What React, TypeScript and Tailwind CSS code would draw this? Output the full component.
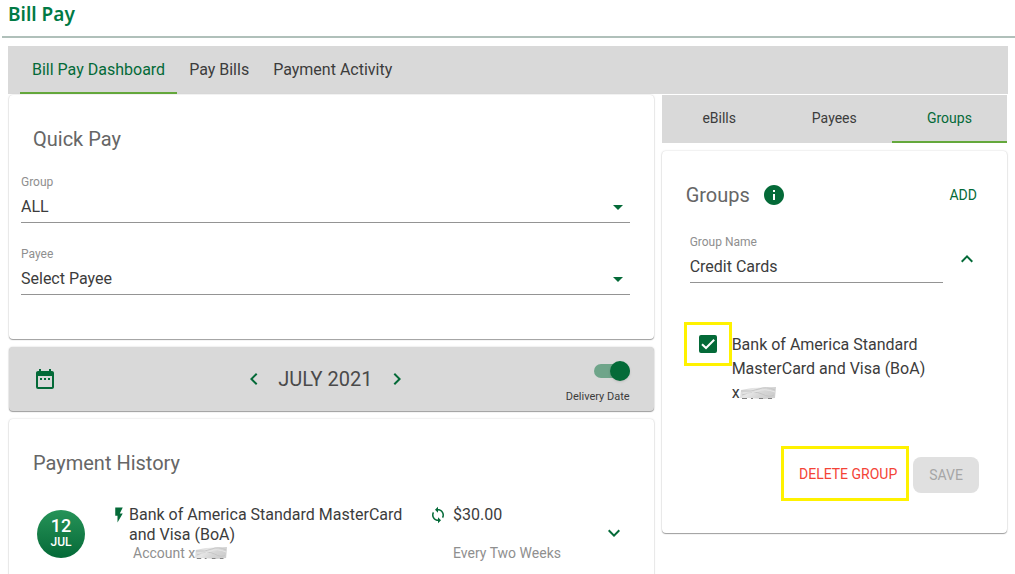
import { useState } from "react";
import {
  MdArrowDropDown,
  MdChevronLeft,
  MdChevronRight,
  MdDateRange,
  MdExpandLess,
  MdExpandMore,
  MdFlashOn,
  MdInfo,
  MdSync,
} from "react-icons/md";

const mainTabs = ["Bill Pay Dashboard", "Pay Bills", "Payment Activity"];
const sideTabs = ["eBills", "Payees", "Groups"];

const cardClasses =
  "rounded-sm bg-white shadow-[0_1px_1px_rgba(0,0,0,0.35),0_0_2px_rgba(0,0,0,0.2)]";

interface SelectFieldProps {
  id: string;
  label: string;
  options: string[];
}

function SelectField({ id, label, options }: SelectFieldProps) {
  return (
    <div>
      <label htmlFor={id} className="block text-xs leading-4 text-[#8f8f8f]">
        {label}
      </label>
      <div className="relative mt-[5px]">
        <select
          id={id}
          className="block w-full appearance-none border-b border-[#949494] bg-transparent pb-[3px] text-base leading-6 text-[#3c3c3c] outline-none"
        >
          {options.map((option) => (
            <option key={option}>{option}</option>
          ))}
        </select>
        <MdArrowDropDown
          size={24}
          className="pointer-events-none absolute right-0 top-0 text-[#046a38]"
        />
      </div>
    </div>
  );
}

// Scribble that hides the account digits
function Redaction({ id, className }: { id: string; className: string }) {
  return (
    <svg
      viewBox="0 0 36 12"
      preserveAspectRatio="none"
      className={className}
      role="img"
      aria-label="hidden digits"
    >
      <defs>
        <linearGradient id={id} x1="0" y1="0" x2="1" y2="0.4">
          <stop offset="0" stopColor="#d2d2d2" />
          <stop offset="0.4" stopColor="#e6e6e6" />
          <stop offset="0.7" stopColor="#d6d6d6" />
          <stop offset="1" stopColor="#cfcfcf" />
        </linearGradient>
      </defs>
      <path d="M1 3 L12 1 L36 0 L35 11 L24 12 L8 11 L0 11 Z" fill={`url(#${id})`} />
      <path
        d="M1 4 Q12 5 19 2 T35 3 M2 8 Q14 3 22 7 T34 8"
        fill="none"
        stroke="#c6c6c6"
        strokeWidth="1"
      />
      <path d="M3 6 Q12 7 18 4 T35 5" fill="none" stroke="#e6e6e6" strokeWidth="1" />
      <path
        d="M2 11.5 H7 M11 11.5 H13 M19 11.5 H23 M28 11.5 H32"
        stroke="#808080"
        strokeWidth="1"
      />
    </svg>
  );
}

function QuickPay() {
  return (
    <section className={`${cardClasses} pb-11 pl-3 pr-6 pt-8`}>
      <h2 className="pl-3 text-xl leading-6 text-[#666]">Quick Pay</h2>
      <div className="mt-[23px] flex flex-col gap-[23px]">
        <SelectField id="group" label="Group" options={["ALL", "Credit Cards"]} />
        <SelectField id="payee" label="Payee" options={["Select Payee"]} />
      </div>
    </section>
  );
}

function MonthBar() {
  const [delivery, setDelivery] = useState(true);

  return (
    <section className="flex h-16 items-center rounded-sm bg-[#d9d9d9] pl-3 pr-6 shadow-[0_1px_1px_rgba(0,0,0,0.35),0_0_2px_rgba(0,0,0,0.2)]">
      <div className="flex flex-1">
        <button aria-label="Open calendar" className="ml-3 text-[#046a38]">
          <MdDateRange size={24} />
        </button>
      </div>
      <div className="flex items-center gap-3">
        <button aria-label="Previous month" className="text-[#046a38]">
          <MdChevronLeft size={24} />
        </button>
        <span className="text-xl leading-6 text-[#4a4a4a]">JULY 2021</span>
        <button aria-label="Next month" className="text-[#046a38]">
          <MdChevronRight size={24} />
        </button>
      </div>
      <div className="flex flex-1 justify-end">
        <label className="flex flex-col items-end gap-2 pt-2 text-[11px] leading-4 text-[#3c3c3c]">
          <span className="relative flex h-5 w-9 items-center">
            <input
              type="checkbox"
              role="switch"
              checked={delivery}
              onChange={() => setDelivery(!delivery)}
              className="peer absolute inset-0 appearance-none"
            />
            <span className="pointer-events-none h-3.5 w-full rounded-full bg-gray-400 peer-checked:bg-[#6fa58a]" />
            <span className="pointer-events-none absolute left-0 top-0 size-5 rounded-full bg-white shadow peer-checked:left-4 peer-checked:bg-[#046a38]" />
          </span>
          Delivery Date
        </label>
      </div>
    </section>
  );
}

function PaymentHistory() {
  return (
    <section className={`${cardClasses} flex-1 px-6 pb-6 pt-8`}>
      <h2 className="text-xl leading-6 text-[#666]">Payment History</h2>
      <div className="mt-[30px] flex px-1">
        <div className="mt-[5px] flex size-12 shrink-0 flex-col items-center justify-center rounded-full bg-linear-to-b from-[#259358] to-[#046a38] font-medium text-white">
          <span className="text-lg leading-4">12</span>
          <span className="text-xs leading-4">JUL</span>
        </div>
        <div className="ml-[25px] flex min-w-0 flex-[7] gap-px">
          <MdFlashOn size={18} className="mt-px shrink-0 text-[#046a38]" />
          <div>
            <p className="text-base leading-5 text-[#3c3c3c]">
              Bank of America Standard MasterCard and Visa (BoA)
            </p>
            <p className="flex items-center pl-1 text-sm leading-4 text-[#8f8f8f]">
              Account x
              <Redaction id="history-mask" className="h-3 w-8" />
            </p>
          </div>
        </div>
        <div className="ml-[17px] flex flex-[4] gap-1.5">
          <MdSync size={18} className="mt-px shrink-0 text-[#046a38]" />
          <div>
            <p className="text-base leading-5 text-[#3c3c3c]">$30.00</p>
            <p className="mt-5 text-sm leading-4 text-[#8f8f8f]">Every Two Weeks</p>
          </div>
        </div>
        <button aria-label="Show payment" className="self-center text-[#046a38]">
          <MdExpandMore size={24} />
        </button>
      </div>
    </section>
  );
}

function GroupsCard() {
  const [groupName, setGroupName] = useState("Credit Cards");
  const [checked, setChecked] = useState(true);

  return (
    <section className={`${cardClasses} mt-2 pb-8 pl-6 pr-7 pt-8`}>
      <div className="flex items-center">
        <h2 className="text-xl leading-6 text-[#666]">Groups</h2>
        <button aria-label="About groups" className="ml-3 text-[#046a38]">
          <MdInfo size={24} />
        </button>
        <button className="ml-auto mr-0.5 text-sm leading-6 text-[#046a38]">ADD</button>
      </div>

      <div className="mt-[27px] flex items-start pl-1">
        <div className="flex-1">
          <label htmlFor="group-name" className="block text-xs leading-4 text-[#8f8f8f]">
            Group Name
          </label>
          <input
            id="group-name"
            value={groupName}
            onChange={(e) => setGroupName(e.target.value)}
            className="mt-[5px] block w-full border-b border-[#949494] bg-transparent pb-[3px] text-base leading-6 text-[#3c3c3c] outline-none"
          />
        </div>
        <button aria-label="Collapse group" className="ml-3 mt-[13px] text-[#046a38]">
          <MdExpandLess size={24} />
        </button>
      </div>

      <div className="-ml-0.5 mt-[39px] flex items-start">
        <div className="flex h-11 w-12 shrink-0 items-center justify-center border-3 border-[#fff200]">
          <span className="relative flex size-[18px]">
            <input
              id="boa"
              type="checkbox"
              checked={checked}
              onChange={() => setChecked(!checked)}
              className="peer size-[18px] appearance-none rounded-xs border-2 border-[#046a38] checked:bg-[#046a38]"
            />
            <svg
              viewBox="0 0 18 18"
              className="pointer-events-none absolute inset-0 hidden peer-checked:block"
            >
              <path
                d="M3 9.2 L7 13 L15.2 4.8"
                fill="none"
                stroke="#fff"
                strokeWidth="2"
              />
            </svg>
          </span>
        </div>
        <label htmlFor="boa" className="mt-[11px] text-base leading-6 text-[#3c3c3c]">
          Bank of America Standard MasterCard and Visa (BoA)
          <span className="flex items-center">
            x
            <Redaction id="group-mask" className="h-3 w-9" />
          </span>
        </label>
      </div>

      <div className="mt-[41px] flex items-end justify-end gap-1">
        <div className="border-3 border-[#fff200] pb-3 pl-[15px] pr-[9px] pt-[13px]">
          <button className="block text-sm leading-6 text-[#f44336]">DELETE GROUP</button>
        </div>
        <button
          disabled
          className="mb-2 h-9 rounded-lg bg-[#e0e0e0] px-4 text-sm leading-5 text-[#a6a6a6]"
        >
          SAVE
        </button>
      </div>
    </section>
  );
}

export default function App() {
  const [mainTab, setMainTab] = useState("Bill Pay Dashboard");
  const [sideTab, setSideTab] = useState("Groups");

  return (
    <div className="flex h-screen flex-col overflow-hidden bg-white font-[Roboto,sans-serif]">
      <header className="ml-0.5 border-b-2 border-[#b0c0ba] pb-2 pl-1.5">
        <h1 className="font-['Noto_Sans',sans-serif] text-[19px] font-semibold leading-7 text-[#007a45]">
          Bill Pay
        </h1>
      </header>

      <nav className="ml-2 mr-[7px] mt-2 flex shrink-0 bg-[#d9d9d9] pl-3">
        {mainTabs.map((tab) => (
          <button
            key={tab}
            onClick={() => setMainTab(tab)}
            className={
              tab === mainTab
                ? "h-12 border-b-2 border-[#64a83c] px-3 pt-0.5 text-base text-[#046a38]"
                : "h-12 border-b-2 border-transparent px-3 pt-0.5 text-base text-[#3c3c3c]"
            }
          >
            {tab}
          </button>
        ))}
      </nav>

      <main className="mt-px grid min-h-0 flex-1 grid-cols-[28fr_15fr] gap-2 pl-[9px] pr-2">
        <div className="flex flex-col gap-2">
          <QuickPay />
          <MonthBar />
          <PaymentHistory />
        </div>

        <aside>
          <nav className="grid grid-cols-3 bg-[#d9d9d9]">
            {sideTabs.map((tab) => (
              <button
                key={tab}
                onClick={() => setSideTab(tab)}
                className={
                  tab === sideTab
                    ? "h-12 border-b-2 border-[#64a83c] text-sm text-[#046a38]"
                    : "h-12 border-b-2 border-transparent text-sm text-[#3c3c3c]"
                }
              >
                {tab}
              </button>
            ))}
          </nav>
          <GroupsCard />
        </aside>
      </main>
    </div>
  );
}
